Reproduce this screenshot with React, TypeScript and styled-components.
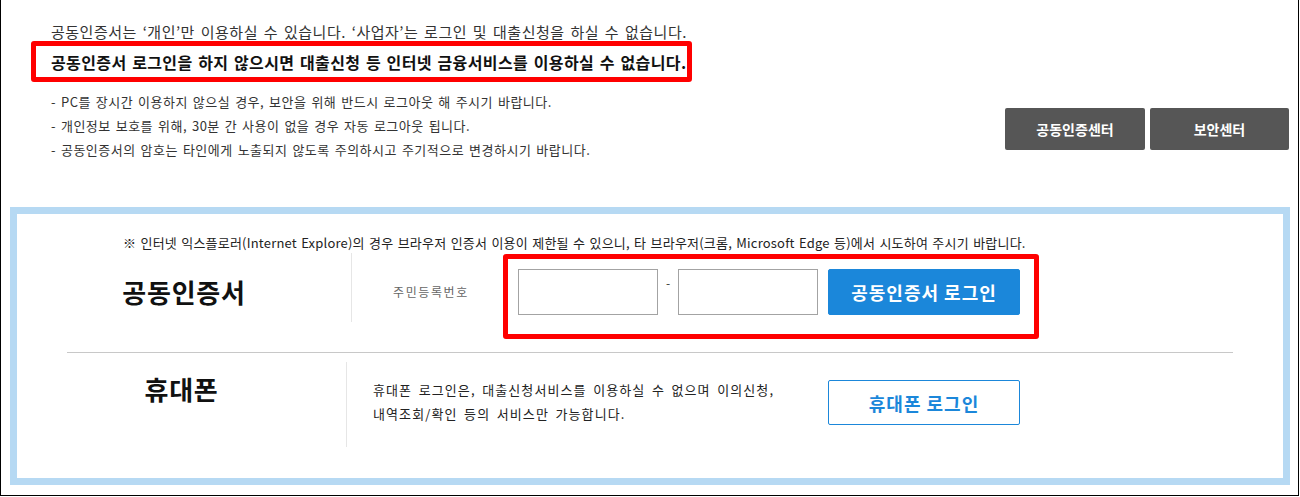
import React from "react";
import styled, { createGlobalStyle } from "styled-components";

const GlobalStyle = createGlobalStyle`
  html, body {
    margin: 0;
    padding: 0;
    background: #fff;
  }
  body {
    font-family: "Noto Sans CJK KR", "Noto Sans", sans-serif;
    color: #333;
  }
  * {
    box-sizing: border-box;
  }
`;

const Frame = styled.div`
  width: 1299px;
  height: 496px;
  border-left: 1px solid #000;
  border-right: 1px solid #000;
  border-bottom: 1px solid #000;
  overflow: hidden;
`;

const TopSection = styled.div`
  display: flex;
  justify-content: space-between;
  align-items: flex-start;
  padding: 22px 9px 0 30px;
`;

const NoticeColumn = styled.div`
  display: flex;
  flex-direction: column;
`;

const IntroLine = styled.p`
  margin: 0 0 0 20px;
  font-size: 15px;
  line-height: 19px;
  color: #333;
  letter-spacing: 0.5px;
  word-spacing: 2px;
  white-space: nowrap;
`;

const Highlight = styled.div`
  width: 661px;
  height: 41px;
  border: 5px solid #ff0000;
  border-radius: 3px;
  padding-left: 15px;
  display: flex;
  align-items: center;
  font-size: 16px;
  font-weight: 700;
  color: #111;
  letter-spacing: 0.4px;
  word-spacing: 1.5px;
  white-space: nowrap;
`;

const BulletList = styled.ul`
  list-style: none;
  margin: 8px 0 0 20px;
  padding: 0;
`;

const Bullet = styled.li`
  font-size: 13px;
  line-height: 24px;
  color: #333;
  letter-spacing: 0.5px;
  word-spacing: 1.5px;
  white-space: nowrap;
`;

const CenterButtons = styled.div`
  display: flex;
  gap: 5px;
  margin-top: 86px;
`;

const DarkButton = styled.button<{ w: number }>`
  width: ${({ w }) => w}px;
  height: 42px;
  border: none;
  border-radius: 2px;
  background: #565656;
  color: #fff;
  font-family: inherit;
  font-size: 14px;
  font-weight: 700;
  cursor: pointer;
`;

const LoginBox = styled.div`
  width: 1280px;
  margin: 45px 0 0 9px;
  border: 7px solid #b6d9f3;
  padding: 20px 0 31px;
`;

const BrowserNotice = styled.p`
  margin: 0 0 1px 106px;
  font-size: 13px;
  line-height: 18px;
  color: #222;
  letter-spacing: 0.2px;
  word-spacing: 1.2px;
  white-space: nowrap;
`;

const LoginRow = styled.div`
  display: flex;
  align-items: flex-start;
`;

const TitleCell = styled.div<{ w: number; h: number; pt: number }>`
  width: ${({ w }) => w}px;
  height: ${({ h }) => h}px;
  padding-top: ${({ pt }) => pt}px;
  border-right: 1px solid #e6e6e6;
  display: flex;
  justify-content: center;
  font-size: 26px;
  line-height: 30px;
  font-weight: 700;
  letter-spacing: 0.8px;
  color: #111;
`;

const FieldLabel = styled.div`
  width: 151px;
  padding: 31px 0 0 41px;
  font-size: 12px;
  line-height: 16px;
  letter-spacing: 1.6px;
  color: #666;
  white-space: nowrap;
`;

const InputFrame = styled.div`
  margin-top: 1px;
  display: flex;
  align-items: flex-start;
  border: 5px solid #ff0000;
  border-radius: 3px;
  padding: 10px 14px 19px 10px;
`;

const IdInput = styled.input`
  width: 140px;
  height: 46px;
  border: 1px solid #a3a3a3;
  padding: 0 8px;
  font-family: inherit;
  font-size: 14px;
  outline: none;
`;

const Dash = styled.span`
  width: 20px;
  text-align: center;
  margin-top: 6px;
  font-size: 12px;
  line-height: 16px;
  color: #333;
`;

const LoginButton = styled.button<{ outline?: boolean }>`
  width: 192px;
  height: ${({ outline }) => (outline ? 45 : 46)}px;
  margin-left: ${({ outline }) => (outline ? 0 : 10)}px;
  margin-top: ${({ outline }) => (outline ? 18 : 0)}px;
  border: 1px solid #1b87da;
  border-radius: 2px;
  background: ${({ outline }) => (outline ? "#fff" : "#1b87da")};
  color: ${({ outline }) => (outline ? "#1b87da" : "#fff")};
  font-family: inherit;
  font-size: 18px;
  font-weight: 700;
  letter-spacing: 1px;
  cursor: pointer;
`;

const Divider = styled.hr`
  margin: 13px 50px 0;
  border: none;
  border-top: 1px solid #c8c8c8;
`;

const PhoneRow = styled(LoginRow)`
  margin-top: 9px;
`;

const PhoneDesc = styled.p`
  width: 481px;
  margin: 0;
  padding: 16px 0 0 26px;
  font-size: 13px;
  line-height: 24px;
  color: #222;
  letter-spacing: 1.1px;
  word-spacing: 2.5px;
  white-space: nowrap;
`;

const bullets = [
  "- PC를 장시간 이용하지 않으실 경우, 보안을 위해 반드시 로그아웃 해 주시기 바랍니다.",
  "- 개인정보 보호를 위해, 30분 간 사용이 없을 경우 자동 로그아웃 됩니다.",
  "- 공동인증서의 암호는 타인에게 노출되지 않도록 주의하시고 주기적으로 변경하시기 바랍니다.",
];

export default function App() {
  return (
    <>
      <GlobalStyle />
      <Frame>
        <TopSection>
          <NoticeColumn>
            <IntroLine>
              공동인증서는 ‘개인’만 이용하실 수 있습니다. ‘사업자’는 로그인 및 대출신청을 하실 수 없습니다.
            </IntroLine>
            <Highlight>공동인증서 로그인을 하지 않으시면 대출신청 등 인터넷 금융서비스를 이용하실 수 없습니다.</Highlight>
            <BulletList>
              {bullets.map((b) => (
                <Bullet key={b}>{b}</Bullet>
              ))}
            </BulletList>
          </NoticeColumn>
          <CenterButtons>
            <DarkButton w={140}>공동인증센터</DarkButton>
            <DarkButton w={139}>보안센터</DarkButton>
          </CenterButtons>
        </TopSection>

        <LoginBox>
          <BrowserNotice>
            ※ 인터넷 익스플로러(Internet Explore)의 경우 브라우저 인증서 이용이 제한될 수 있으니, 타 브라우저(크롬, Microsoft Edge 등)에서 시도하여 주시기 바랍니다.
          </BrowserNotice>
          <LoginRow>
            <TitleCell w={335} h={69} pt={24}>
              공동인증서
            </TitleCell>
            <FieldLabel>주민등록번호</FieldLabel>
            <InputFrame>
              <IdInput type="text" aria-label="주민등록번호 앞자리" />
              <Dash>-</Dash>
              <IdInput type="password" aria-label="주민등록번호 뒷자리" />
              <LoginButton>공동인증서 로그인</LoginButton>
            </InputFrame>
          </LoginRow>
          <Divider />
          <PhoneRow>
            <TitleCell w={330} h={85} pt={12}>
              휴대폰
            </TitleCell>
            <PhoneDesc>
              휴대폰 로그인은, 대출신청서비스를 이용하실 수 없으며 이의신청,
              <br />
              내역조회/확인 등의 서비스만 가능합니다.
            </PhoneDesc>
            <LoginButton outline>휴대폰 로그인</LoginButton>
          </PhoneRow>
        </LoginBox>
      </Frame>
    </>
  );
}
